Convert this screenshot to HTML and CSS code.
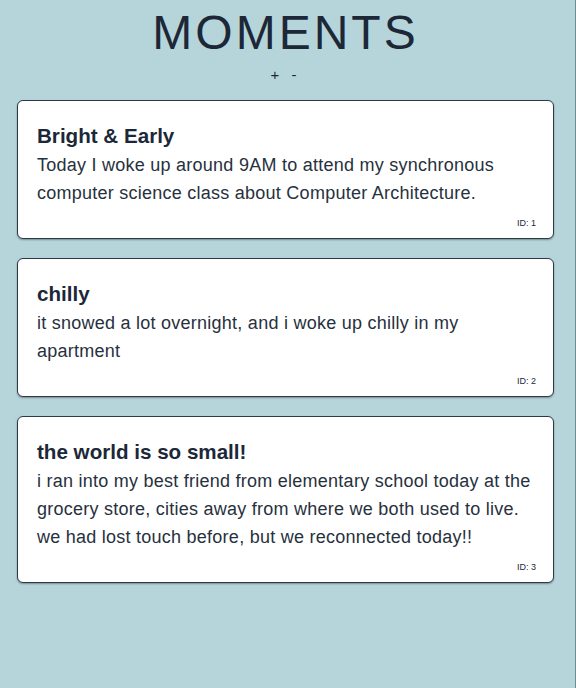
FILE: index.html
```html
<!DOCTYPE html>
<html>
<head>
<meta charset="utf-8">
<link rel="stylesheet" href="styles.css">
</head>
<body>
<main class="page">
  <h1 class="title">MOMENTS</h1>
  <div class="controls"><span class="ctl">+</span><span class="ctl">-</span></div>
  <section class="list">
    <article class="card">
      <h2 class="card-title">Bright &amp; Early</h2>
      <p class="card-body">Today I woke up around 9AM to attend my synchronous computer science class about Computer Architecture.</p>
      <div class="card-id">ID: 1</div>
    </article>
    <article class="card">
      <h2 class="card-title">chilly</h2>
      <p class="card-body">it snowed a lot overnight, and i woke up chilly in my apartment</p>
      <div class="card-id">ID: 2</div>
    </article>
    <article class="card">
      <h2 class="card-title">the world is so small!</h2>
      <p class="card-body">i ran into my best friend from elementary school today at the grocery store, cities away from where we both used to live. we had lost touch before, but we reconnected today!!</p>
      <div class="card-id">ID: 3</div>
    </article>
  </section>
</main>
</body>
</html>
```
FILE: styles.css
```css
html, body {
  margin: 0;
  height: 100%;
}
body {
  background: #b6d5da;
  font-family: "Liberation Sans", Arial, sans-serif;
  color: #1c2837;
  border-right: 1px solid #6f8a90;
  box-sizing: border-box;
}
.page {
  padding: 5px 21px 0 17px;
}
.title {
  margin: 0;
  text-align: center;
  font-size: 48px;
  font-weight: normal;
  letter-spacing: 3px;
  line-height: 55px;
}
.controls {
  display: flex;
  justify-content: center;
  gap: 12px;
  font-size: 15px;
  line-height: 18px;
  margin-top: 6px;
  padding-right: 4px;
}
.list {
  margin-top: 16px;
  display: flex;
  flex-direction: column;
  gap: 19px;
}
.card {
  background: #fff;
  border: 1px solid #2b3a46;
  border-radius: 6px;
  box-shadow: 0 1px 2px rgba(0,0,0,0.35);
  padding: 20px 17px 9px 19px;
}
.card-title {
  margin: 0;
  font-size: 20.6px;
  font-weight: bold;
  line-height: 30px;
}
.card-body {
  margin: 0;
  font-size: 18px;
  letter-spacing: 0.25px;
  line-height: 28px;
  color: #27313d;
}
.card-id {
  margin-top: 10px;
  text-align: right;
  font-size: 9px;
  line-height: 12px;
}
```
